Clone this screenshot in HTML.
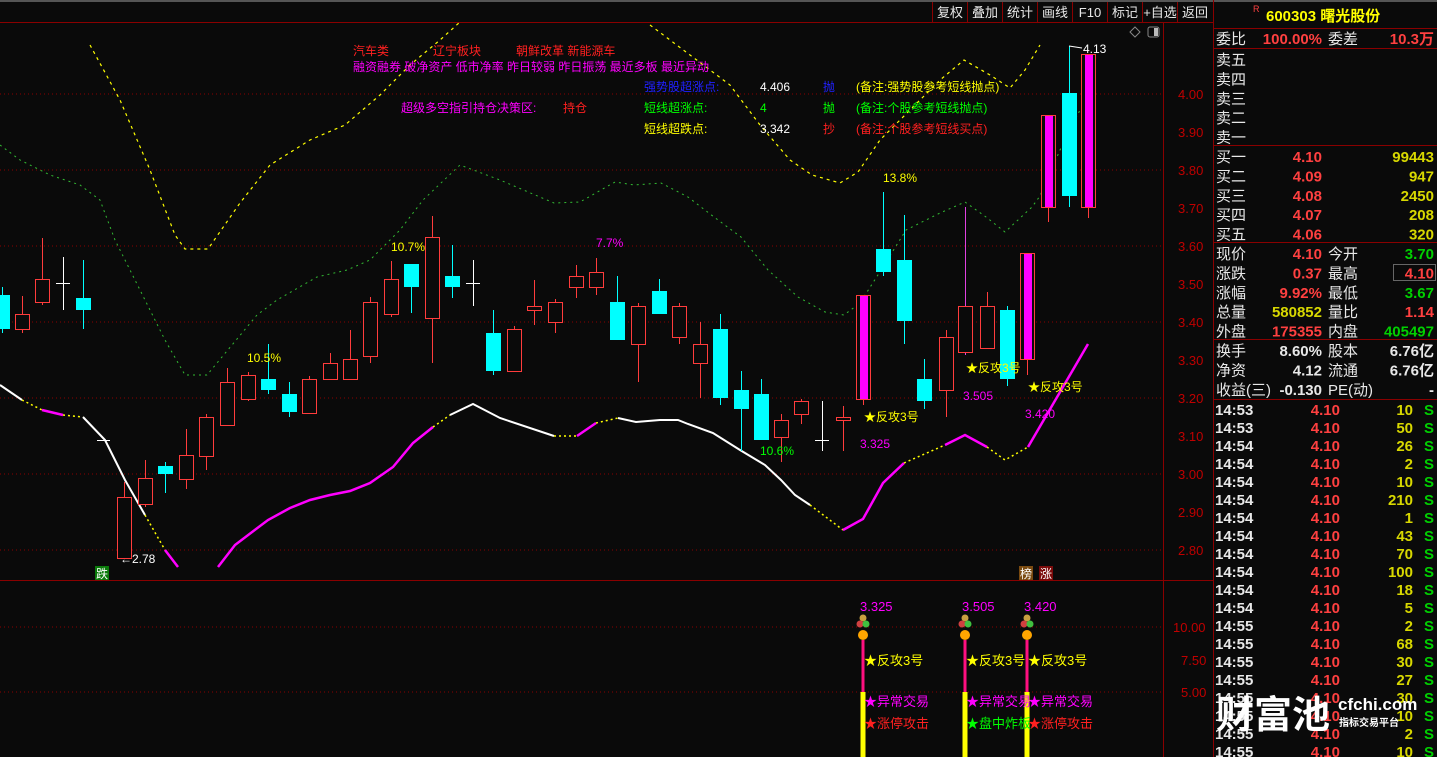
<!DOCTYPE html>
<html><head><meta charset="utf-8"><style>
html,body{margin:0;padding:0;background:#0a0a0a;width:1437px;height:757px;overflow:hidden}
svg{display:block}
text{font-family:"Liberation Sans","Noto Sans CJK SC",sans-serif}
</style></head><body>
<svg id="s" width="1437" height="757" xmlns="http://www.w3.org/2000/svg">
<rect width="1437" height="757" fill="#0a0a0a"/>
<rect x="0" y="0" width="1437" height="2" fill="#555"/>
<line x1="0" y1="22.5" x2="1213" y2="22.5" stroke="#8a0000"/>
<g stroke="#8a0000"><line x1="932.5" y1="2" x2="932.5" y2="22"/><line x1="967.5" y1="2" x2="967.5" y2="22"/><line x1="1002.5" y1="2" x2="1002.5" y2="22"/><line x1="1037.5" y1="2" x2="1037.5" y2="22"/><line x1="1072.5" y1="2" x2="1072.5" y2="22"/><line x1="1107.5" y1="2" x2="1107.5" y2="22"/><line x1="1142.5" y1="2" x2="1142.5" y2="22"/><line x1="1177.5" y1="2" x2="1177.5" y2="22"/></g>
<g fill="#e8e8e8" font-size="13" text-anchor="middle">
<text x="950" y="17">复权</text><text x="985" y="17">叠加</text><text x="1020" y="17">统计</text><text x="1055" y="17">画线</text><text x="1090" y="17">F10</text><text x="1125" y="17">标记</text><text x="1160" y="17">+自选</text><text x="1195" y="17">返回</text></g>
<path d="M1135 27 L1140 32 L1135 37 L1130 32 Z" fill="none" stroke="#888"/>
<rect x="1148" y="27" width="11" height="10" rx="2" fill="none" stroke="#888"/><rect x="1154" y="28" width="4" height="8" fill="#bbb"/>
<g stroke="#8a0000" stroke-dasharray="1,3">
<line x1="0" y1="94" x2="1163" y2="94"/><line x1="0" y1="170" x2="1163" y2="170"/><line x1="0" y1="246" x2="1163" y2="246"/><line x1="0" y1="322" x2="1163" y2="322"/><line x1="0" y1="398" x2="1163" y2="398"/><line x1="0" y1="474" x2="1163" y2="474"/><line x1="0" y1="550" x2="1163" y2="550"/>
<line x1="0" y1="627" x2="1163" y2="627"/><line x1="0" y1="692" x2="1163" y2="692"/></g>
<line x1="1163.5" y1="22" x2="1163.5" y2="757" stroke="#8a0000"/>
<line x1="0" y1="580.5" x2="1213" y2="580.5" stroke="#8a0000"/>
<line x1="1213.5" y1="0" x2="1213.5" y2="757" stroke="#8a0000"/>
<g fill="#c00000" font-size="13">
<text x="1178" y="99">4.00</text><text x="1178" y="137">3.90</text><text x="1178" y="175">3.80</text><text x="1178" y="213">3.70</text><text x="1178" y="251">3.60</text><text x="1178" y="289">3.50</text><text x="1178" y="327">3.40</text><text x="1178" y="365">3.30</text><text x="1178" y="403">3.20</text><text x="1178" y="441">3.10</text><text x="1178" y="479">3.00</text><text x="1178" y="517">2.90</text><text x="1178" y="555">2.80</text>
<text x="1173" y="632">10.00</text><text x="1181" y="665">7.50</text><text x="1181" y="697">5.00</text></g>
<g id="lines"></g>
<g id="candles"></g>
<g font-size="12">
<text x="353" y="55" fill="#ff2020">汽车类</text><text x="433" y="55" fill="#ff2020">辽宁板块</text><text x="516" y="55" fill="#ff2020">朝鲜改革 新能源车</text>
<text x="353" y="71" fill="#ff00ff">融资融券 破净资产 低市净率 昨日较弱 昨日振荡 最近多板 最近异动</text>
<text x="644" y="91" fill="#2020ff">强势股超涨点:</text><text x="760" y="91" fill="#fff">4.406</text><text x="823" y="91" fill="#2020ff">抛</text><text x="856" y="91" fill="#ffff00">(备注:强势股参考短线抛点)</text>
<text x="401" y="112" fill="#ff00ff">超级多空指引持仓决策区:</text><text x="563" y="112" fill="#ff2020">持仓</text>
<text x="644" y="112" fill="#00ff00">短线超涨点:</text><text x="760" y="112" fill="#00ff00">4</text><text x="823" y="112" fill="#00ff00">抛</text><text x="856" y="112" fill="#00ff00">(备注:个股参考短线抛点)</text>
<text x="644" y="133" fill="#ffff00">短线超跌点:</text><text x="760" y="133" fill="#fff">3.342</text><text x="823" y="133" fill="#ff2020">抄</text><text x="856" y="133" fill="#ff2020">(备注:个股参考短线买点)</text>
<text x="247" y="362" fill="#ffff00">10.5%</text><text x="391" y="251" fill="#ffff00">10.7%</text><text x="596" y="247" fill="#ff00ff">7.7%</text><text x="760" y="455" fill="#00ff00">10.6%</text><text x="883" y="182" fill="#ffff00">13.8%</text>
<text x="864" y="421" fill="#ffff00">★反攻3号</text><text x="966" y="372" fill="#ffff00">★反攻3号</text><text x="1028" y="391" fill="#ffff00">★反攻3号</text>
<text x="860" y="448" fill="#ff00ff">3.325</text><text x="963" y="400" fill="#ff00ff">3.505</text><text x="1025" y="418" fill="#ff00ff">3.420</text>
<text x="1083" y="53" fill="#fff">4.13</text><text x="120" y="563" fill="#fff">←2.78</text>
</g>
<path d="M1069 46 L1082 48" stroke="#fff"/>
<rect x="95" y="566" width="14" height="14" fill="#0a7a0a"/><text x="96" y="578" font-size="12" fill="#fff">跌</text>
<rect x="1019" y="566" width="14" height="14" fill="#7a4a10"/><text x="1020" y="578" font-size="12" fill="#fff">榜</text>
<rect x="1039" y="566" width="14" height="14" fill="#7a0a0a"/><text x="1040" y="578" font-size="12" fill="#fff">涨</text>
<g id="lower"></g>
<g font-size="13">
<text x="860" y="611" fill="#ff00ff">3.325</text><text x="962" y="611" fill="#ff00ff">3.505</text><text x="1024" y="611" fill="#ff00ff">3.420</text>
<text x="864" y="665" fill="#ffff00">★反攻3号</text><text x="966" y="665" fill="#ffff00">★反攻3号</text><text x="1028" y="665" fill="#ffff00">★反攻3号</text>
<text x="864" y="706" fill="#ff00ff">★异常交易</text><text x="966" y="706" fill="#ff00ff">★异常交易</text><text x="1028" y="706" fill="#ff00ff">★异常交易</text>
<text x="864" y="728" fill="#ff2020">★涨停攻击</text><text x="966" y="728" fill="#00ff00">★盘中炸板</text><text x="1028" y="728" fill="#ff2020">★涨停攻击</text>
</g>
<g stroke="#8a0000"><line x1="1213" y1="28.5" x2="1437" y2="28.5"/><line x1="1213" y1="48.5" x2="1437" y2="48.5"/><line x1="1213" y1="145.5" x2="1437" y2="145.5"/><line x1="1213" y1="242.5" x2="1437" y2="242.5"/><line x1="1213" y1="339.5" x2="1437" y2="339.5"/><line x1="1213" y1="399.5" x2="1437" y2="399.5"/></g>
<text x="1253" y="12" font-size="9" fill="#ff4040">R</text>
<text x="1266" y="21" font-size="15" font-weight="bold" fill="#ffff00">600303 曙光股份</text>
<g id="rp" font-size="15"></g>
<text x="1216" y="728" font-size="38" font-weight="bold" fill="#fff" font-family="Noto Sans CJK SC,sans-serif">财富池</text>
<text x="1338" y="710" font-size="17" font-weight="bold" fill="#fff">cfchi.com</text>
<text x="1339" y="726" font-size="10" font-weight="bold" fill="#fff">指标交易平台</text>
</svg>
<script>
var NS="http://www.w3.org/2000/svg";
function el(p,t,a){var e=document.createElementNS(NS,t);for(var k in a)e.setAttribute(k,a[k]);p.appendChild(e);return e;}
var C=document.getElementById('candles');
var d=[[2,'c',295,329,287,333],[22,'r',314,329,296,333],[42,'r',279,302,238,305],[63,'w',283,283,257,310],[83,'c',298,310,260,329],
[124,'r',497,558,482,558],[145,'r',478,504,460,507],[165,'c',466,474,462,493],[186,'r',455,479,429,489],[206,'r',417,456,414,470],[227,'r',382,425,368,425],[248,'r',375,399,372,401],[268,'c',379,390,344,394],[289,'c',394,412,382,417],[309,'r',379,413,376,413],[330,'r',363,379,353,379],[350,'r',359,379,330,379],[370,'r',302,356,297,363],[391,'r',279,314,261,317],[411,'c',264,287,264,313],[432,'r',237,318,216,363],[452,'c',276,287,245,298],[473,'w',283,283,260,306],[493,'c',333,371,310,375],
[514,'r',329,371,326,371],[534,'r',306,310,280,325],[555,'r',302,322,299,333],[576,'r',276,287,265,298],[596,'r',272,287,258,295],[617,'c',302,340,276,340],[638,'r',306,344,303,382],[659,'c',291,314,279,314],[679,'r',306,337,303,344],[700,'r',344,363,322,398],[720,'c',329,398,314,405],[741,'c',390,409,371,451],[761,'c',394,440,379,440],[781,'r',420,437,414,462],[801,'r',401,414,399,424],[822,'w',440,440,401,451],[843,'r',417,420,406,451],[863,'m',295,399,295,405],[883,'c',249,272,192,276],[904,'c',260,321,215,344],[924,'c',379,401,359,409],[946,'r',337,390,330,417],[965,'r',306,352,207,355],[987,'r',306,348,292,348],[1007,'c',310,379,306,386],[1027,'m',253,359,253,375],[1048,'m',115,207,115,222],[1069,'c',93,196,46,207],[1088,'m',54,207,54,218]];
d.forEach(function(c){var x=c[0],t=c[1];
 if(t=='w'){el(C,'line',{x1:x+.5,y1:c[4],x2:x+.5,y2:c[5],stroke:'#fff'});el(C,'line',{x1:x-7,y1:c[2]+.5,x2:x+7,y2:c[2]+.5,stroke:'#fff'});return;}
 var col=t=='c'?'#00ffff':'#ff3c3c';
 var wc=(x==965)?'#e040e0':col;
 el(C,'line',{x1:x+.5,y1:c[4],x2:x+.5,y2:c[5],stroke:wc});
 if(t=='c')el(C,'rect',{x:x-7,y:c[2],width:15,height:Math.max(1,c[3]-c[2]),fill:'#00ffff'});
 else if(t=='m'){el(C,'rect',{x:x-6.5,y:c[2]+.5,width:14,height:c[3]-c[2],fill:'#0a0a0a',stroke:'#ff3c3c'});el(C,'rect',{x:x-3,y:c[2]+1,width:8,height:c[3]-c[2]-1,fill:'#ff00ff'});}
 else el(C,'rect',{x:x-6.5,y:c[2]+.5,width:14,height:Math.max(1,c[3]-c[2]),fill:'#0a0a0a',stroke:'#ff3c3c'});
});
var L=document.getElementById('lines');
function pl(pts,col,w,dash){var a={points:pts,fill:'none',stroke:col,'stroke-width':w};if(dash)a['stroke-dasharray']=dash;el(L,'polyline',a);}
pl("90,45 120,100 150,170 175,235 185,249 208,249 240,203 270,165 310,140 345,125 380,95 410,65 440,40 460,22",'#ffff00',1.2,'3,4');
pl("650,25 690,55 730,85 760,125 790,160 812,175 840,183 858,172 880,140 910,110 940,80 964,60 990,75 1010,88 1025,70 1040,45",'#ffff00',1.2,'3,4');
pl("0,145 20,160 50,175 80,185 100,200 115,240 140,290 165,340 185,375 207,375 257,315 277,300 317,277 347,270 370,260 400,230 423,200 460,165 500,180 554,203 580,202 615,182 634,185 661,183 688,197 714,217 741,237 768,270 798,297 825,312 844,315 860,303 883,267 906,230 940,213 965,202 986,217 1005,232 1032,207 1040,196 1060,150 1080,110 1090,100",'#33bb33',1,'2,4');
pl("0,385 22,400",'#fff',2);pl("22,400 42,410",'#ffff00',1.5,'2,3');pl("42,410 63,415",'#ff00ff',2.5);pl("63,415 83,417",'#ffff00',1.5,'2,3');
pl("83,417 105,440 125,480 145,515",'#fff',2);pl("145,515 165,550",'#ffff00',1.5,'2,3');pl("165,550 178,567",'#ff00ff',2.5);
pl("218,567 235,545 268,520 290,508 310,500 330,495 350,491 370,483 393,467 413,443 433,427",'#ff00ff',2.5);
pl("433,427 450,415",'#ffff00',1.5,'2,3');pl("450,415 473,404 500,418 554,436",'#fff',2);pl("554,436 577,436",'#ffff00',1.5,'2,3');
pl("577,436 596,423",'#ff00ff',2.5);pl("596,423 618,418",'#ffff00',1.5,'2,3');
pl("618,418 636,422 660,420 678,420 688,424 713,433 740,450 765,465 781,480 795,495 810,505",'#fff',2);
pl("810,505 843,530",'#ffff00',1.5,'2,3');pl("843,530 863,519 883,483 904,463",'#ff00ff',2.5);pl("904,463 945,445",'#ffff00',1.5,'2,3');
pl("945,445 965,435 987,447",'#ff00ff',2.5);pl("987,447 1005,460 1028,447",'#ffff00',1.5,'2,3');pl("1028,447 1088,344",'#ff00ff',2.5);
el(L,'line',{x1:97,y1:440.5,x2:110,y2:440.5,stroke:'#fff'});
var LO=document.getElementById('lower');
[863,965,1027].forEach(function(x){
 el(LO,'rect',{x:x-1.5,y:640,width:3,height:52,fill:'#ff1080'});
 el(LO,'rect',{x:x-2.5,y:692,width:5,height:65,fill:'#ffff00'});
 el(LO,'circle',{cx:x,cy:618,r:3.5,fill:'#c8a040'});
 el(LO,'circle',{cx:x-3,cy:624,r:3.5,fill:'#d04040'});
 el(LO,'circle',{cx:x+3,cy:624,r:3.5,fill:'#40c040'});
 el(LO,'circle',{cx:x,cy:635,r:5,fill:'#ffa500'});
});
var R=document.getElementById('rp');
function tx(x,y,s,c,anc,bold){var e=el(R,'text',{x:x,y:y,fill:c});if(anc)e.setAttribute('text-anchor',anc);if(bold)e.setAttribute('font-weight','bold');e.textContent=s;}
var W='#e8e8e8',RD='#ff4040',Y='#d8d800',G='#00d000';
tx(1216,44,'委比',W);tx(1322,44,'100.00%',RD,'end',1);tx(1328,44,'委差',W);tx(1434,44,'10.3万',RD,'end',1);
['卖五','卖四','卖三','卖二','卖一'].forEach(function(s,i){tx(1216,65+i*19.4,s,W);});
var b=[['买一','4.10','99443'],['买二','4.09','947'],['买三','4.08','2450'],['买四','4.07','208'],['买五','4.06','320']];
b.forEach(function(r,i){var y=162+i*19.4;tx(1216,y,r[0],W);tx(1322,y,r[1],RD,'end',1);tx(1434,y,r[2],Y,'end',1);});
var q=[['现价','4.10',RD,'今开','3.70',G],['涨跌','0.37',RD,'最高','4.10',RD],['涨幅','9.92%',RD,'最低','3.67',G],['总量','580852',Y,'量比','1.14',RD],['外盘','175355',RD,'内盘','405497',G]];
q.forEach(function(r,i){var y=259+i*19.4;tx(1216,y,r[0],W);tx(1322,y,r[1],r[2],'end',1);tx(1328,y,r[3],W);tx(1434,y,r[4],r[5],'end',1);});
el(R,'rect',{x:1393.5,y:264.5,width:42,height:16,fill:'none',stroke:'#666'});
var e2=[['换手','8.60%','股本','6.76亿'],['净资','4.12','流通','6.76亿'],['收益(三)','-0.130','PE(动)','-']];
e2.forEach(function(r,i){var y=356+i*19.4;tx(1216,y,r[0],W);tx(1322,y,r[1],W,'end',1);tx(1328,y,r[2],W);tx(1434,y,r[3],W,'end',1);});
var tr=[['14:53','10'],['14:53','50'],['14:54','26'],['14:54','2'],['14:54','10'],['14:54','210'],['14:54','1'],['14:54','43'],['14:54','70'],['14:54','100'],['14:54','18'],['14:54','5'],['14:55','2'],['14:55','68'],['14:55','30'],['14:55','27'],['14:55','30'],['14:55','10'],['14:55','2'],['14:55','10']];
tr.forEach(function(r,i){var y=415+i*18;tx(1215,y,r[0],W,null,1);tx(1340,y,'4.10',RD,'end',1);tx(1413,y,r[1],Y,'end',1);tx(1424,y,'S',G,null,1);});
</script>
</body></html>
